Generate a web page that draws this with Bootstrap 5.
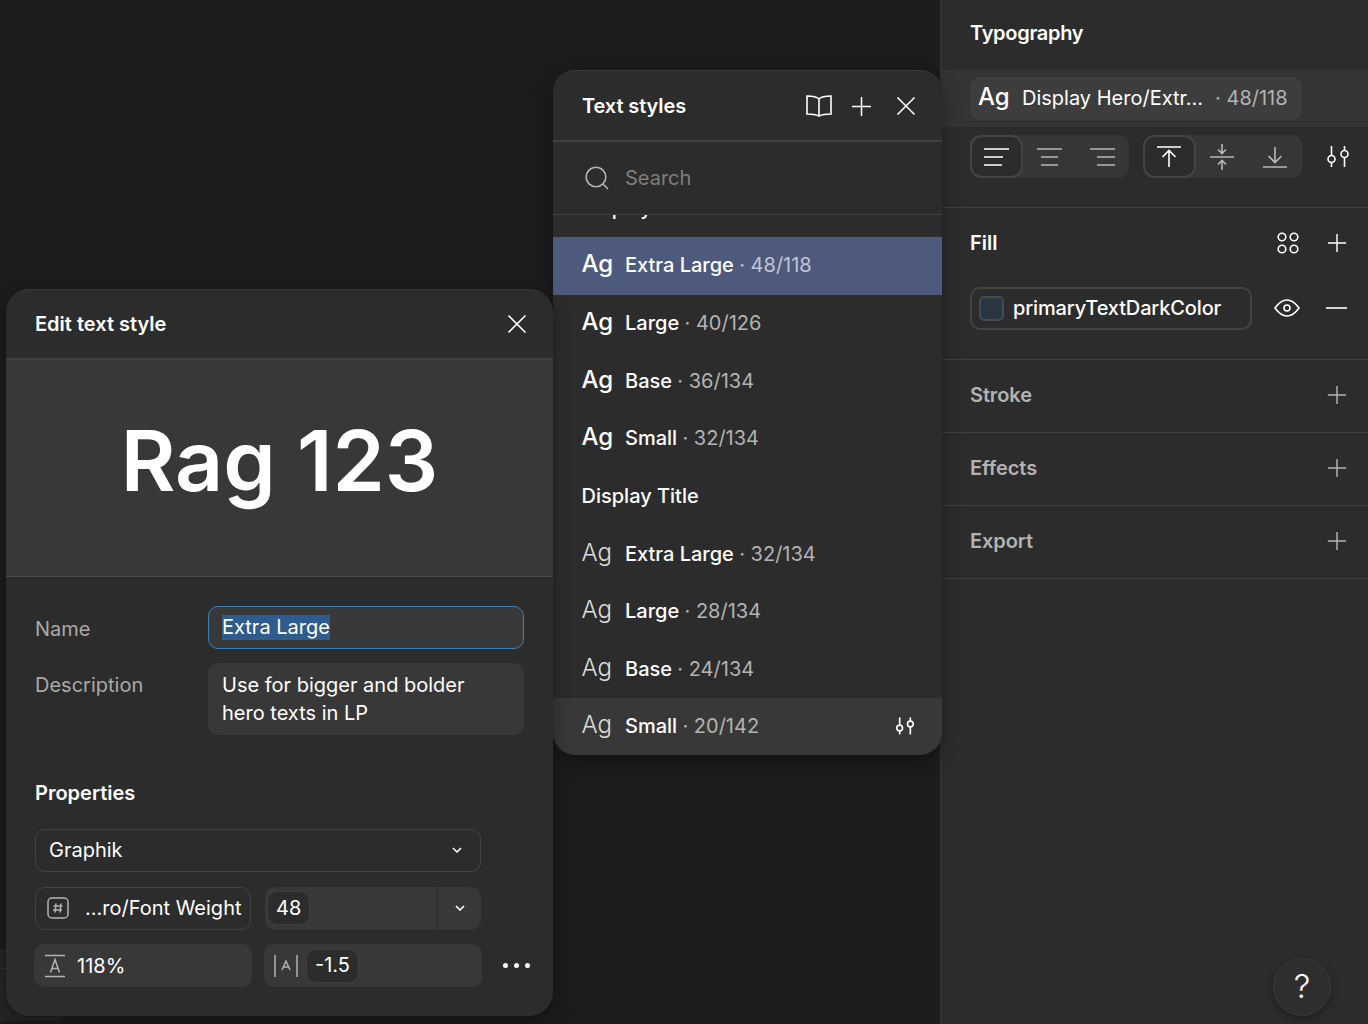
<!DOCTYPE html>
<html lang="en" data-bs-theme="dark">
<head>
<meta charset="utf-8">
<title>Text styles</title>
<link href="https://cdn.jsdelivr.net/npm/bootstrap@5.3.0/dist/css/bootstrap.min.css" rel="stylesheet">
<style>
html,body{height:100%;}
body{background:#1c1c1c;color:#fff;font-family:Inter,"Liberation Sans",sans-serif;font-size:20px;overflow:hidden;}
svg{display:block;fill:none;stroke:currentColor;stroke-width:1.6;flex:none;}
.stage{position:relative;width:1368px;height:1024px;overflow:hidden;}
.ghost{position:absolute;left:0;top:950px;width:64px;height:71px;background:#252525;border-top:1px solid #333;border-radius:0 0 6px 0;}
.ghost::after{content:"";position:absolute;left:0;right:0;top:17px;border-top:1px solid #333;}
.side{position:absolute;left:940px;top:0;width:428px;height:1024px;background:#2c2c2c;border-left:1px solid #333;}
.side-head{height:70px;padding:0 30px 4px 29px;font-weight:600;letter-spacing:-.3px;}
.side-band{height:57px;background:#343434;padding:7px 0 7px 29px;}
.style-chip{width:332px;height:43px;background:#3d3d3d;border-radius:10px;padding:0 0 2px 8px;}
.ag-big{font-size:24px;line-height:1;width:44px;font-weight:500;position:relative;top:-1px;}
.grey{color:#b3b3b3;}
.side-tools{padding:8px 16px 0 29px;height:81px;gap:14px;border-bottom:1px solid #404040;}
.seg{height:43px;width:159px;background:#363636;border-radius:10px;color:#b8b8b8;}
.seg-item{width:53px;height:43px;}
.seg-on{background:#2c2c2c;border:2px solid #444;border-radius:12px;color:#fff;}
.nudge{margin-left:-2px;}
.tune-wrap{height:43px;margin-left:11px;}
.side-row{padding:0 21px 2px 29px;}
.sec{height:73px;border-bottom:1px solid #404040;font-weight:600;color:#b3b3b3;letter-spacing:-.1px;}
.fill-sec{height:152px;border-bottom:1px solid #404040;padding:17px 21px 0 29px;}
.fill-field{width:282px;height:43px;border:2px solid #434343;border-radius:10px;padding-left:7px;gap:9px;}
.fill-name{font-weight:500;letter-spacing:-.15px;padding-bottom:2px;}
.swatch{width:25px;height:25px;background:#2e3542;border:2px solid #444a55;border-radius:5px;}
.help{position:absolute;left:1273px;top:958px;width:58px;height:58px;border-radius:50%;background:#2e2e2e;border:1px solid #3a3a3a;box-shadow:0 3px 10px rgba(0,0,0,.35);font-size:33px;font-weight:300;}

.styles-win{position:absolute;left:553px;top:70px;width:389px;height:685px;background:#2c2c2c;border-radius:22px;border:1px solid #3a3a3a;border-left:0;border-right:0;box-shadow:0 6px 18px rgba(0,0,0,.35);overflow:hidden;}
.win-head{height:71px;padding:0 26px 0 29px;border-bottom:2px solid #404040;font-weight:600;letter-spacing:-.1px;}
.search-row{height:73px;padding:0 29px 0 32px;gap:16px;border-bottom:1px solid #404040;color:#7e7e7e;}
.list-clip{height:540px;overflow:hidden;}
.s-row{height:57.6px;padding:0 28px 0 28.5px;font-weight:500;white-space:pre;}
.s-row.sliver{margin-top:-35.6px;}
.s-row.active{background:#4d5a7d;height:58px;padding-bottom:1px;}
.s-row.active + .s-row{height:57.2px;}
.s-row.active .grey{color:#c0c5d2;}
.s-row.hov{background:#383838;}
.ag{font-size:24px;line-height:1;width:43.500px;position:relative;top:-1px;font-weight:500;}
.ag.thin{font-weight:300;color:#dcdcdc;}
.val{font-weight:400;}

.edit-win{position:absolute;left:6px;top:289px;width:547px;height:727px;background:#2c2c2c;border-radius:24px;border-top:1px solid #3a3a3a;box-shadow:0 6px 18px rgba(0,0,0,.35);overflow:hidden;}
.edit-head{height:70px;padding:0 26px 0 29px;border-bottom:2px solid #404040;font-weight:600;}
.preview{height:217px;background:#383838;border-bottom:1px solid #4a4a4a;font-size:84px;font-weight:600;line-height:1;padding-bottom:15px;}
.edit-body{padding:29px 29px 0;}
.form-grid{display:grid;grid-template-columns:173px 316px;row-gap:14px;}
.lbl{color:#a9a9a9;font-weight:400;}
.name-input{height:43px;border:1px solid #3a82bd;background:#383838;border-radius:10px;padding:0 13px 1px;}
.sel{background:#2e5c8f;line-height:25px;display:inline-block;}
.desc{height:72px;background:#383838;border-radius:10px;padding:8px 14px;line-height:28px;}
.prop-title{font-weight:600;margin:44px 0 22px;line-height:28px;}
.f-box{height:43px;border:1px solid #434343;border-radius:10px;padding-bottom:2px;}
.f-fill{height:43px;background:#383838;border-radius:10px;}
.r-font{width:446px;padding:0 18px 2px 13px;}
.f-row{gap:14px;width:446px;margin-top:15px;}
.f-half{width:216px;flex:none;}
.f-size{padding:0 0 1px 2px;}
.f-wide{width:218px;flex:none;padding-left:10px;}
.pill{height:34px;background:#2c2c2c;border:1px solid #3f3f3f;border-radius:10px;padding:0 8px 1px;}
.caret-cell{width:44px;height:100%;border-left:1px solid #2c2c2c;}
.third{margin:14px 0 0 -1px;gap:12px;}
.pct{margin-left:3px;}
.dots{margin-left:9px;gap:6px;flex:none;}
.dots i{width:5px;height:5px;border-radius:50%;background:#fff;display:block;}
.up1{margin-bottom:2px;}
</style>
</head>
<body>
<svg width="0" height="0" class="position-absolute">
<symbol id="i-plus" viewBox="0 0 22 22"><path d="M11 1v20M1 11h20"/></symbol>
<symbol id="i-x" viewBox="0 0 20 20"><path d="M1.5 1.5l17 17M18.500 1.500l-17 17"/></symbol>
<symbol id="i-tune" viewBox="0 0 22 21"><path d="M4.500 0v9.500M4.500 16.500V21M17.500 0v4.500M17.500 11.500V21"/><circle cx="4.500" cy="13" r="3.500"/><circle cx="17.500" cy="8" r="3.500"/></symbol>
<symbol id="i-caret" viewBox="0 0 10 6"><path d="M1 1l4 4 4-4" stroke-width="1.6"/></symbol>
</svg>
<div class="stage">
<div class="ghost"></div>

<aside class="side d-flex flex-column">
  <div class="side-head d-flex align-items-center">Typography</div>
  <div class="side-band">
    <div class="style-chip d-flex align-items-center">
      <span class="ag-big">Ag</span>
      <span class="text-nowrap">Display Hero/Extr...</span>
      <span class="grey text-nowrap ms-2 ps-1">· 48/118</span>
    </div>
  </div>
  <div class="side-tools d-flex">
    <div class="seg d-flex">
      <div class="seg-item seg-on d-flex align-items-center justify-content-center"><svg width="26" height="18" viewBox="0 0 26 18"><path d="M0 1h25M0 9h19M0 17h18"/></svg></div>
      <div class="seg-item d-flex align-items-center justify-content-center"><svg width="26" height="18" viewBox="0 0 26 18"><path d="M0 1h25M4 9h17M4 17h17"/></svg></div>
      <div class="seg-item d-flex align-items-center justify-content-center"><svg width="26" height="18" viewBox="0 0 26 18"><path d="M0 1h25M7 9h18M7 17h18"/></svg></div>
    </div>
    <div class="seg d-flex">
      <div class="seg-item seg-on d-flex align-items-center justify-content-center"><svg class="nudge" width="24" height="22" viewBox="0 0 24 22"><path d="M0 1h24M12 21V5M5.500 11l6.500-6.500 6.500 6.500"/></svg></div>
      <div class="seg-item d-flex align-items-center justify-content-center"><svg class="nudge" width="24" height="28" viewBox="0 0 24 28"><path d="M0 14h24M12 1v9M8 6.500l4 4 4-4M12 27v-9M8 21.500l4-4 4 4"/></svg></div>
      <div class="seg-item d-flex align-items-center justify-content-center"><svg class="nudge" width="24" height="22" viewBox="0 0 24 22"><path d="M0 21h24M12 1v15M5.500 10l6.500 6.500 6.500-6.500"/></svg></div>
    </div>
    <div class="tune-wrap d-flex align-items-center"><svg width="22" height="21"><use href="#i-tune"/></svg></div>
  </div>
  <div class="fill-sec">
    <div class="d-flex align-items-center justify-content-between" style="height:36px;font-weight:600">
      <span>Fill</span>
      <div class="d-flex align-items-center" style="gap:28px">
        <svg width="22" height="22" viewBox="0 0 22 22"><circle cx="5" cy="5" r="3.800"/><circle cx="17" cy="5" r="3.800"/><circle cx="5" cy="17" r="3.800"/><circle cx="17" cy="17" r="3.800"/></svg>
        <svg width="20" height="20"><use href="#i-plus"/></svg>
      </div>
    </div>
    <div class="d-flex align-items-center justify-content-between" style="margin-top:26px">
      <div class="fill-field d-flex align-items-center"><span class="swatch"></span><span class="fill-name">primaryTextDarkColor</span></div>
      <div class="d-flex align-items-center up1" style="gap:26px">
        <svg width="26" height="18" viewBox="0 0 26 18"><path d="M1 9C5 3.500 9 1 13 1s8 2.500 12 8c-4 5.500-8 8-12 8S5 14.500 1 9z"/><circle cx="13" cy="9" r="3"/></svg>
        <svg width="21" height="2" viewBox="0 0 21 2"><path d="M0 1h21"/></svg>
      </div>
    </div>
  </div>
  <div class="sec side-row d-flex align-items-center justify-content-between"><span>Stroke</span><svg width="20" height="20" class="grey"><use href="#i-plus"/></svg></div>
  <div class="sec side-row d-flex align-items-center justify-content-between"><span>Effects</span><svg width="20" height="20" class="grey"><use href="#i-plus"/></svg></div>
  <div class="sec side-row d-flex align-items-center justify-content-between"><span>Export</span><svg width="20" height="20" class="grey"><use href="#i-plus"/></svg></div>
</aside>

<div class="help d-flex align-items-center justify-content-center">?</div>

<section class="styles-win d-flex flex-column">
  <div class="win-head d-flex align-items-center justify-content-between flex-none">
    <span style="padding-top:2px">Text styles</span>
    <div class="d-flex align-items-center" style="padding-top:2px">
      <svg width="26" height="22" viewBox="0 0 26 22" style="margin-right:19px"><path d="M13 4C11 2 7 1 1 1v18c6 0 9 .5 12 2 3-1.500 6-2 12-2V1C19 1 15 2 13 4zM13 4v17"/></svg>
      <svg width="21" height="21" style="margin-right:24px"><use href="#i-plus"/></svg>
      <svg width="20" height="20"><use href="#i-x"/></svg>
    </div>
  </div>
  <div class="search-row d-flex align-items-center flex-none">
    <svg width="24" height="24" viewBox="0 0 24 24" class="grey"><circle cx="11" cy="11" r="9.800"/><path d="M18 18l5 5"/></svg>
    <span>Search</span>
  </div>
  <div class="list-clip">
    <div class="s-row sliver d-flex align-items-center">Display Hero</div>
    <div class="s-row active d-flex align-items-center"><span class="ag">Ag</span><span>Extra Large <span class="grey val">· 48/118</span></span></div>
    <div class="s-row d-flex align-items-center"><span class="ag">Ag</span><span>Large <span class="grey val">· 40/126</span></span></div>
    <div class="s-row d-flex align-items-center"><span class="ag">Ag</span><span>Base <span class="grey val">· 36/134</span></span></div>
    <div class="s-row d-flex align-items-center"><span class="ag">Ag</span><span>Small <span class="grey val">· 32/134</span></span></div>
    <div class="s-row d-flex align-items-center">Display Title</div>
    <div class="s-row d-flex align-items-center"><span class="ag thin">Ag</span><span>Extra Large <span class="grey val">· 32/134</span></span></div>
    <div class="s-row d-flex align-items-center"><span class="ag thin">Ag</span><span>Large <span class="grey val">· 28/134</span></span></div>
    <div class="s-row d-flex align-items-center"><span class="ag thin">Ag</span><span>Base <span class="grey val">· 24/134</span></span></div>
    <div class="s-row hov d-flex align-items-center justify-content-between"><span class="d-flex align-items-center"><span class="ag thin">Ag</span><span>Small <span class="grey val">· 20/142</span></span></span><svg width="18" height="18" style="stroke-width:2"><use href="#i-tune"/></svg></div>
  </div>
</section>

<section class="edit-win">
  <div class="edit-head d-flex align-items-center justify-content-between">
    <span>Edit text style</span>
    <svg width="20" height="20"><use href="#i-x"/></svg>
  </div>
  <div class="preview d-flex align-items-center justify-content-center">Rag 123</div>
  <div class="edit-body">
    <div class="form-grid">
      <div class="lbl d-flex align-items-center" style="padding-top:2px">Name</div>
      <div class="name-input d-flex align-items-center"><span class="sel">Extra Large</span></div>
      <div class="lbl" style="padding-top:8px;line-height:28px">Description</div>
      <div class="desc">Use for bigger and bolder<br>hero texts in LP</div>
    </div>
    <div class="prop-title">Properties</div>
    <div class="f-box r-font d-flex align-items-center justify-content-between"><span>Graphik</span><svg width="10" height="6"><use href="#i-caret"/></svg></div>
    <div class="f-row d-flex">
      <div class="f-box f-half d-flex align-items-center text-nowrap" style="padding:0 8px 2px 11px">
        <svg width="22" height="22" viewBox="0 0 22 22" class="grey me-3" style="stroke-width:1.500"><rect x="1" y="1" width="20" height="20" rx="4"/><path d="M9 6.500L8 15.500M14 6.500L13 15.500M6.500 9h9M6 13h9"/></svg>
        <span>...ro/Font Weight</span>
      </div>
      <div class="f-fill f-half f-size d-flex align-items-center justify-content-between">
        <span class="pill d-flex align-items-center">48</span>
        <span class="caret-cell d-flex align-items-center justify-content-center"><svg width="10" height="6"><use href="#i-caret"/></svg></span>
      </div>
    </div>
    <div class="third d-flex align-items-center">
      <div class="f-fill f-wide d-flex align-items-center">
        <svg width="22" height="24" viewBox="0 0 22 24" class="grey me-2" style="stroke-width:1.500"><path d="M1 1.500h20M1 22.500h20M6.500 18.500L11 5.500l4.500 13M8 14.500h6"/></svg>
        <span class="pct">118%</span>
      </div>
      <div class="f-fill f-wide d-flex align-items-center">
        <svg width="24" height="24" viewBox="0 0 24 24" class="grey me-2" style="stroke-width:1.500"><path d="M1 1v22M23 1v22M8 16L12 7l4 9M9.500 13h5"/></svg>
        <span class="pill d-flex align-items-center">-1.5</span>
      </div>
      <div class="dots d-flex"><i></i><i></i><i></i></div>
    </div>
  </div>
</section>

</div>
<script src="https://cdn.jsdelivr.net/npm/bootstrap@5.3.0/dist/js/bootstrap.bundle.min.js"></script>
</body>
</html>
